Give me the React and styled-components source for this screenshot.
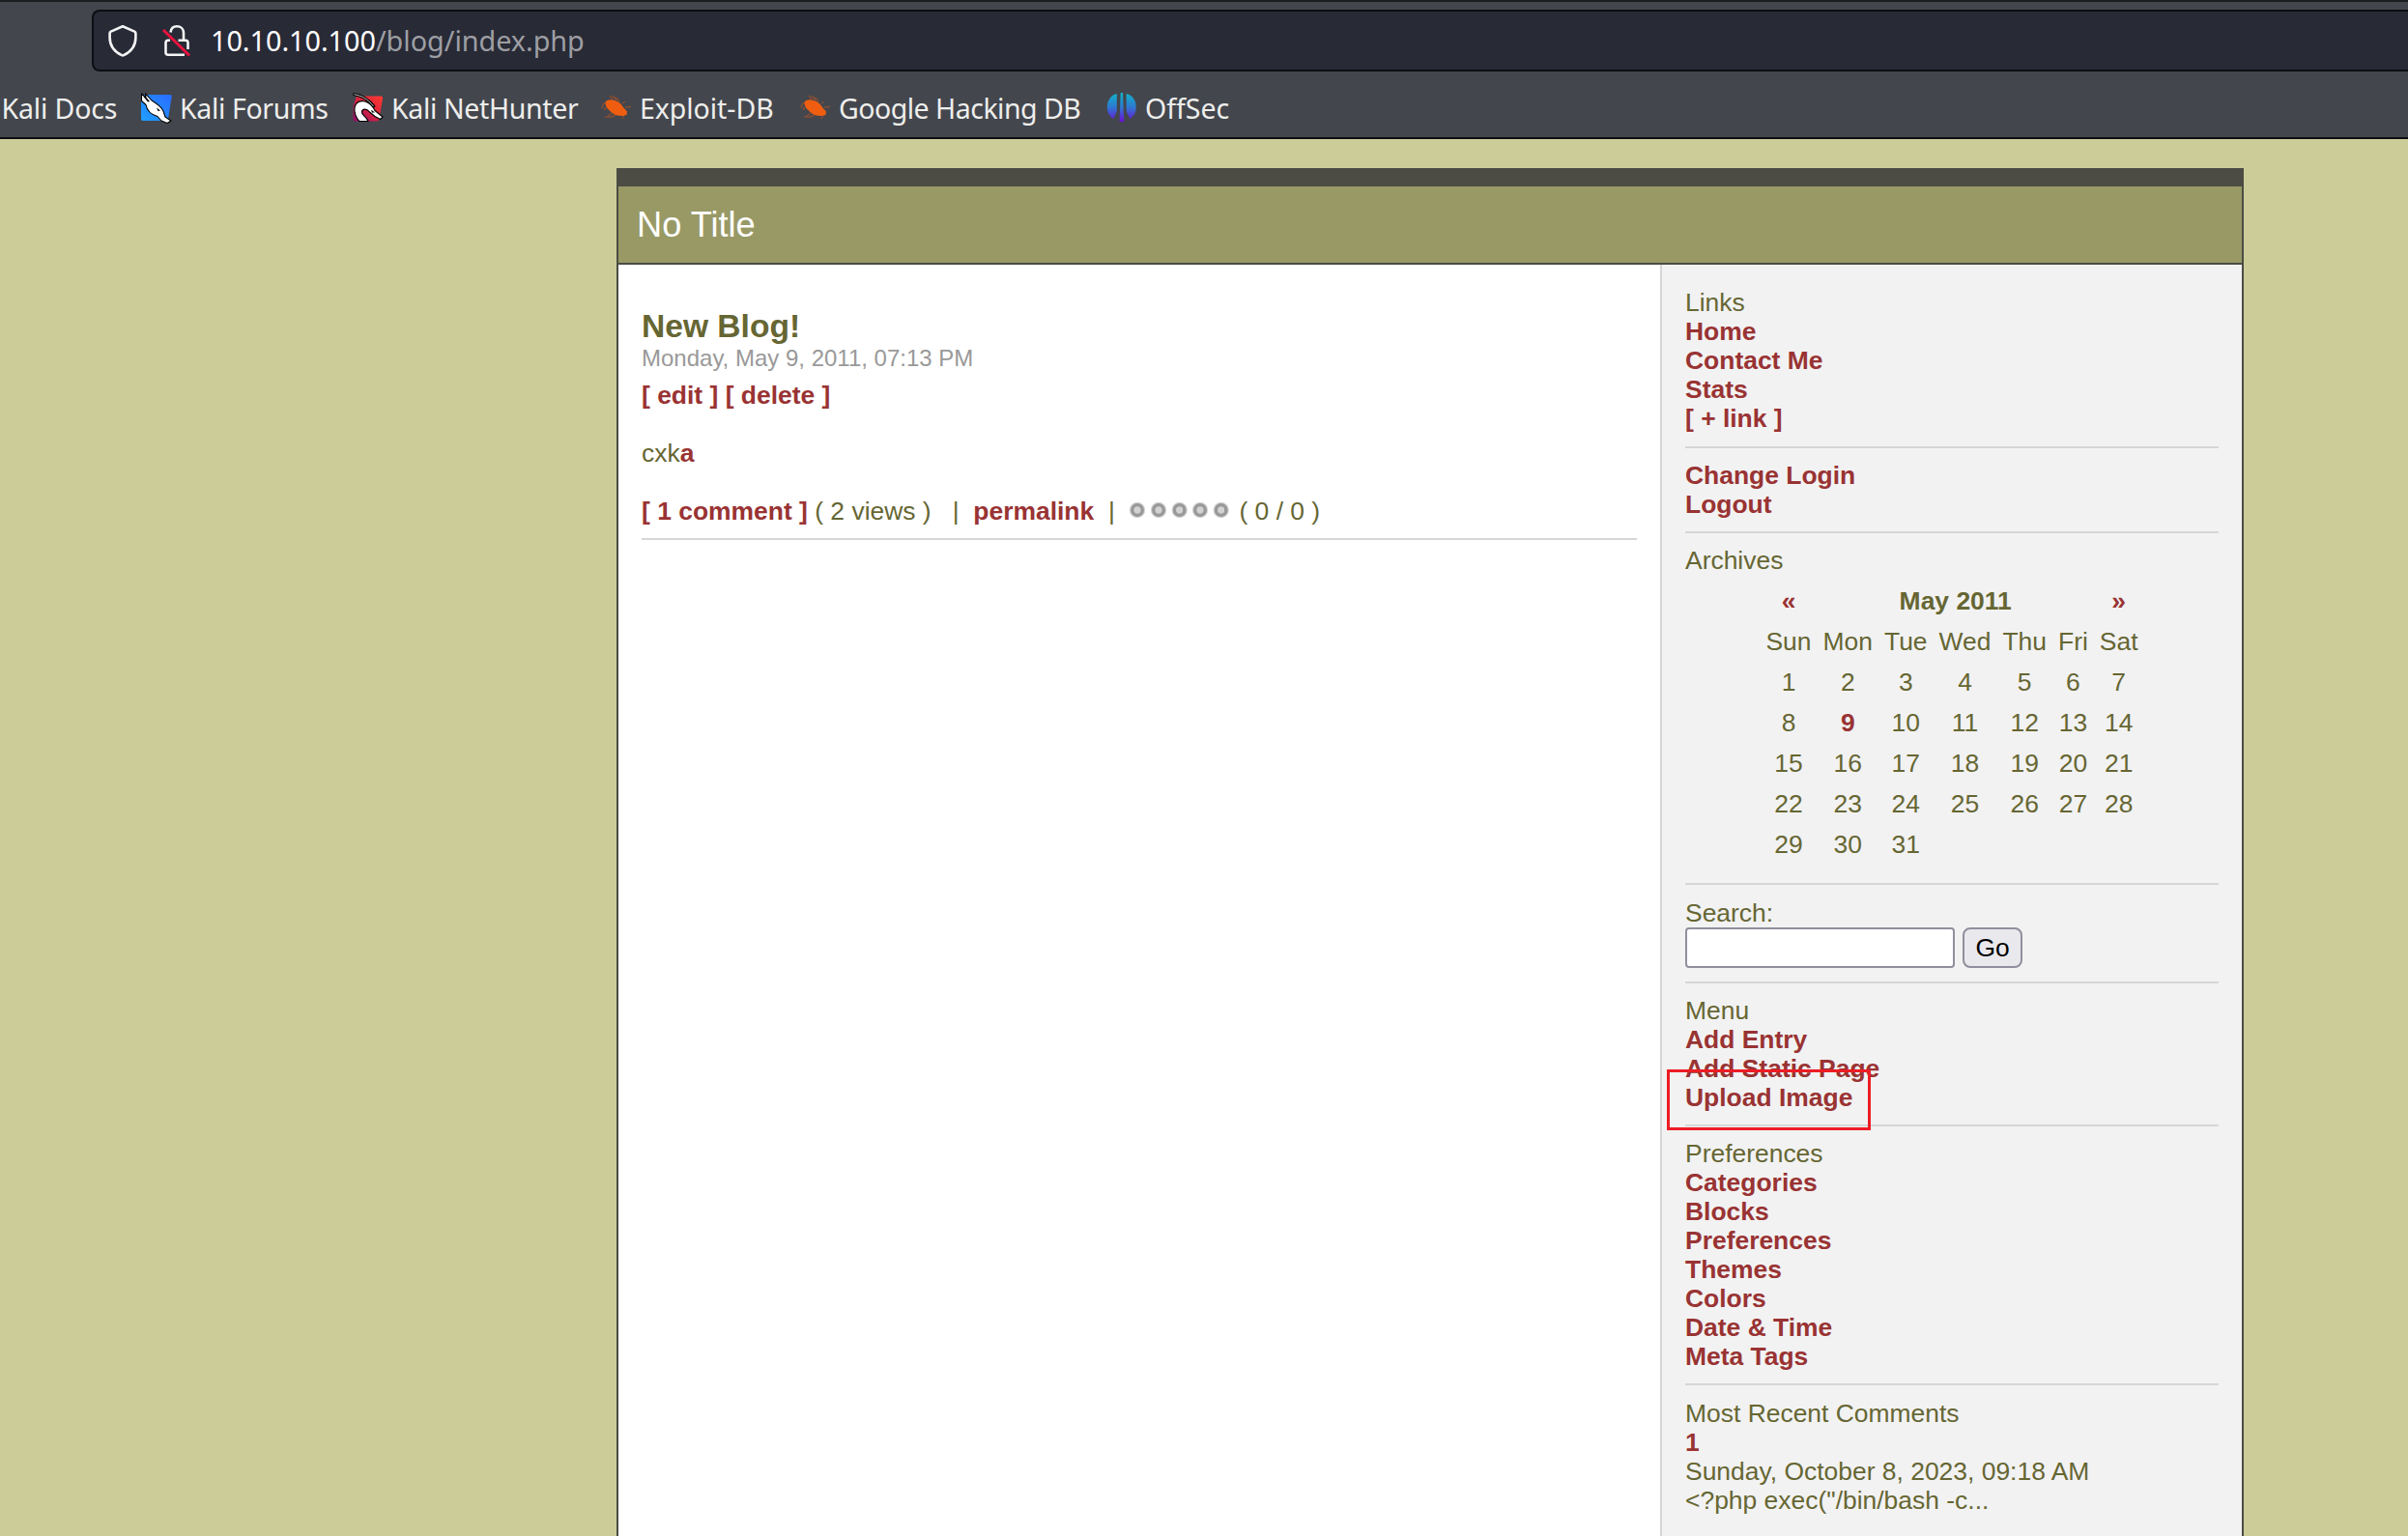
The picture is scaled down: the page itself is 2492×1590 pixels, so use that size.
import React from "react";
import styled, { createGlobalStyle } from "styled-components";

const Global = createGlobalStyle`
  html, body, #root { height: 100%; }
  body { margin: 0; overflow: hidden; background: #cccc99; }
  * { box-sizing: border-box; }
`;

const Screen = styled.div`
  display: flex;
  flex-direction: column;
  height: 1590px;
  overflow: hidden;
`;

const Chrome = styled.header`
  flex: none;
  height: 144px;
  padding-top: 8px;
  background: #43464d;
  border-top: 2px solid #1c1d21;
  border-bottom: 2px solid #0d0e13;
  font-family: "Noto Sans", sans-serif;
`;

const UrlBar = styled.div`
  display: flex;
  align-items: center;
  height: 64px;
  margin-left: 95px;
  padding-left: 11px;
  background: #282a36;
  border: 2px solid #0d0e13;
  border-right: 0;
  border-radius: 8px 0 0 8px;
`;

const UrlIcons = styled.div`
  display: flex;
  gap: 18px;
`;

const Url = styled.div`
  margin-left: 16px;
  font-size: 28.8px;
  line-height: 40px;
  letter-spacing: -0.04px;
  color: #9d9ea3;
  white-space: nowrap;
`;

const Host = styled.span`
  color: #ffffff;
`;

const Bookmarks = styled.nav`
  display: flex;
  align-items: center;
  height: 66px;
  padding: 10px 0 0;
`;

const Bookmark = styled.div`
  flex: none;
  display: flex;
  align-items: center;
  gap: 8px;
  width: ${(p) => p.$width}px;
  font-size: 28.5px;
  line-height: 40px;
  letter-spacing: ${(p) => p.$tracking}px;
  color: #eeeeec;
  white-space: nowrap;
  svg { flex: none; }
  &:first-child { padding-left: 1.5px; }
`;

const Page = styled.div`
  flex: 1;
  display: flex;
  flex-direction: column;
  width: 1684px;
  margin: 30px 0 0 638px;
  border: 2px solid #4c4c44;
  border-top-width: 19px;
  border-bottom: 0;
  background: #ffffff;
  font-family: "Liberation Sans", Arial, sans-serif;
  font-size: 26.45px;
  line-height: 30px;
  color: #666633;
  overflow: hidden;
`;

const Banner = styled.div`
  flex: none;
  height: 81px;
  padding: 19px 19px 0;
  background: #999966;
  border-bottom: 2px solid #4c4c44;
  font-size: 36.2px;
  line-height: 42px;
  color: #ffffff;
`;

const Columns = styled.div`
  flex: 1;
  display: flex;
  min-height: 0;
`;

const Main = styled.main`
  flex: 1;
  padding: 44px 24px 0;
`;

const EntryTitle = styled.h2`
  margin: 0;
  font-size: 33.6px;
  line-height: 39px;
`;

const EntryDate = styled.div`
  font-size: 24px;
  line-height: 28px;
  color: #999999;
`;

const EntryLine = styled.div`
  margin-top: ${(p) => p.$gap}px;
  white-space: pre;
`;

const Link = styled.a`
  font-weight: bold;
  color: #993333;
`;

const Rule = styled.hr`
  height: 2px;
  margin: ${(p) => p.$top ?? 13}px 0 ${(p) => p.$bottom ?? 13}px;
  border: 0;
  background: #d6d6d6;
`;

const Stars = styled.svg`
  margin: 0 8px 0 0;
  vertical-align: 1px;
`;

const Sidebar = styled.aside`
  flex: none;
  width: 602px;
  padding: 24px 24px 0;
  background: #f2f2f2;
  border-left: 2px solid #d6d6d6;
`;

const MenuLink = styled(Link)`
  display: block;
`;

const MarkedItem = styled.div`
  position: relative;
`;

const Marker = styled.span`
  position: absolute;
  left: -19px;
  top: -14px;
  width: 211px;
  height: 63px;
  border: 3px solid #ed1c24;
`;

const Calendar = styled.table`
  margin: 6px auto 0;
  border-collapse: collapse;
  text-align: center;
  th, td { padding: 6px; }
`;

const SearchRow = styled.div`
  display: flex;
  gap: 8px;
`;

const SearchInput = styled.input`
  width: 279px;
  height: 42px;
  border: 2px solid #8f8f9d;
  border-radius: 4px;
  background: #ffffff;
`;

const GoButton = styled.button`
  width: 62px;
  height: 42px;
  padding: 0;
  border: 2px solid #8f8f9d;
  border-radius: 8px;
  background: #e9e9ed;
  font: 26.4px "Liberation Sans", Arial, sans-serif;
  color: #000000;
`;

const ShieldIcon = () => (
  <svg width="38" height="38" viewBox="0 0 38 38" fill="none" stroke="#f4f4f5" strokeWidth="2.6" strokeLinejoin="round">
    <path d="M19 4.3 L31.2 9.6 Q32.4 10.2 32.4 11.5 V16 C32.4 24 27.5 30.5 20 34.2 Q19 34.7 18 34.2 C10.5 30.5 5.6 24 5.6 16 V11.5 Q5.6 10.2 6.8 9.6 Z" />
  </svg>
);

const InsecureIcon = () => (
  <svg width="38" height="38" viewBox="0 0 38 38" fill="none" stroke="#f4f4f5" strokeWidth="2.6">
    <path d="M12.5 10.5 C13 6.5 15.5 4.3 19 4.3 C23 4.3 26 7 26 11 V18.5" />
    <path d="M12 18.8 H10 Q7.5 18.8 7.5 21.3 V31.2 Q7.5 33.7 10 33.7 H27" />
    <path d="M20.5 18.8 H28 Q30.5 18.8 30.5 21.3 V28" />
    <path d="M5 8 L32 34.5" stroke="#e9133d" strokeWidth="3" />
  </svg>
);

const ForumsIcon = () => (
  <svg width="32" height="32" viewBox="0 0 32 32">
    <defs>
      <linearGradient id="forumBlue" x1="0" y1="1" x2="1" y2="0">
        <stop offset="0" stopColor="#1fa0ff" />
        <stop offset="1" stopColor="#2a6cff" />
      </linearGradient>
    </defs>
    <path d="M3 2 H30 Q32 2 31.7 4 L28 27 Q27.6 29 25.5 29 H2 Q0 29 0 27 V9 Z" fill="url(#forumBlue)" />
    <path d="M0.5 1 L5 5 L4.5 0.8 L11 8 C16 11 21 14 23 19 L25 25 L31 29 L27 31.5 L21 29 L17 24.5 C10 22.5 6 18 5 12.5 L0.5 8.5 Z" fill="#fff" stroke="#000" strokeWidth="1.1" strokeLinejoin="round" />
    <path d="M4.500 4 L9 9 L7 9.500 L2 3.500 Z" fill="#000" />
    <path d="M16 15.5 L20 18.5 L17.5 19 Z" fill="#000" />
  </svg>
);

const NetHunterIcon = () => (
  <svg width="32" height="32" viewBox="0 0 32 32">
    <defs>
      <linearGradient id="hunterRed" x1="0" y1="1" x2="1" y2="0">
        <stop offset="0" stopColor="#8d0f70" />
        <stop offset="0.5" stopColor="#d8243f" />
        <stop offset="1" stopColor="#ff3a30" />
      </linearGradient>
    </defs>
    <path d="M4 3.5 H29 Q31.5 3.5 31 6 L27.5 27 Q27 29.5 24.500 29.500 H3 Q0.500 29.500 0.500 27 V14 Z" fill="url(#hunterRed)" />
    <path d="M2 15 C3 10 8 7.500 13 9 C17 10.500 21 14 23 18.500 L31 25 L28.500 27.500 L23 24.500 L17.500 20 C15 16.500 10.500 16 9.500 19.500 C9 23.500 14 24 16 29.500 H7 C4 27 1 21 2 15 Z" fill="#fff" stroke="#000" strokeWidth="1.200" strokeLinejoin="round" />
    <path d="M0.500 1.500 C8 2.500 16 6 22.500 15" fill="none" stroke="#000" strokeWidth="3" />
    <path d="M1.500 1.700 C8 2.800 15.500 6 21.500 14" fill="none" stroke="#d9d9d9" strokeWidth="0.900" />
    <path d="M19 17.500 L23 20.500 L20 20.500 Z" fill="#000" />
  </svg>
);

const BugIcon = () => (
  <svg width="32" height="32" viewBox="0 0 32 32">
    <path
      d="M12 7 L9 3 M16 8 L12 3 M19 10 L17 6 L14 5 M5 10 L2 12 L1 16 M5 15 L3 18 M11 21 L7 24 M15 23 L11 25 H4 M24 23 L22 27 M25 15 L31 14.500 M22 11 L25 9"
      stroke="#a2532c" strokeWidth="1.400" fill="none" opacity="0.700"
    />
    <path d="M4.500 10 Q6 6.500 12 7.500 Q20 9 23 15 L27 19.500 L26.500 23 L22 24 Q14 24 10 19.500 Q4 15 4.500 10 Z" fill="#ef5e10" />
  </svg>
);

const OffSecIcon = () => (
  <svg width="32" height="32" viewBox="0 0 32 32">
    <defs>
      <linearGradient id="offsec" x1="0" y1="0" x2="0" y2="30" gradientUnits="userSpaceOnUse">
        <stop offset="0" stopColor="#0fb5c9" />
        <stop offset="0.5" stopColor="#2f78d0" />
        <stop offset="1" stopColor="#6a0fd6" />
      </linearGradient>
    </defs>
    <g fill="url(#offsec)">
      <path d="M10.800 1 V19 L7.300 27 C3 24 0.800 20.500 0.800 15 C0.800 8 4.500 2.500 10.800 1 Z" />
      <path d="M14.700 0 H17 L18.300 30 H13.500 Z" />
      <path d="M20.600 1 V19 L24.200 27 C28.500 24 30.700 20.500 30.700 15 C30.700 8 27 2.500 20.600 1 Z" />
    </g>
  </svg>
);

const STAR_CENTERS = [9, 31, 52.7, 74, 95.7];

const RatingStars = () => (
  <Stars width="106" height="18" viewBox="0 0 106 18">
    {STAR_CENTERS.map((x) => (
      <g key={x}>
        <circle cx={x} cy="9" r="8.2" fill="#d6d6d6" />
        <circle cx={x} cy="9" r="5.2" fill="none" stroke="#999999" strokeWidth="3.6" />
        <circle cx={x} cy="9" r="3.4" fill="#d2d2d2" />
      </g>
    ))}
  </Stars>
);

const BOOKMARKS = [
  { label: "Kali Docs", width: 146, tracking: -0.15 },
  { label: "Kali Forums", icon: ForumsIcon, width: 219, tracking: -0.35 },
  { label: "Kali NetHunter", icon: NetHunterIcon, width: 257, tracking: -0.35 },
  { label: "Exploit-DB", icon: BugIcon, width: 206, tracking: -0.05 },
  { label: "Google Hacking DB", icon: BugIcon, width: 317, tracking: -0.5 },
  { label: "OffSec", icon: OffSecIcon, width: 130, tracking: 0 },
];

const DAYS = ["Sun", "Mon", "Tue", "Wed", "Thu", "Fri", "Sat"];
const WEEKS = [0, 1, 2, 3, 4].map((w) => DAYS.map((_, d) => w * 7 + d + 1));
const PREFERENCES = ["Categories", "Blocks", "Preferences", "Themes", "Colors", "Date & Time", "Meta Tags"];

export default function App() {
  return (
    <Screen>
      <Global />
      <Chrome>
        <UrlBar>
          <UrlIcons>
            <ShieldIcon />
            <InsecureIcon />
          </UrlIcons>
          <Url>
            <Host>10.10.10.100</Host>/blog/index.php
          </Url>
        </UrlBar>
        <Bookmarks>
          {BOOKMARKS.map(({ label, icon: Icon, width, tracking }) => (
            <Bookmark key={label} $width={width} $tracking={tracking}>
              {Icon && <Icon />}
              {label}
            </Bookmark>
          ))}
        </Bookmarks>
      </Chrome>
      <Page>
        <Banner>No Title</Banner>
        <Columns>
          <Main>
            <EntryTitle>New Blog!</EntryTitle>
            <EntryDate>Monday, May 9, 2011, 07:13 PM</EntryDate>
            <EntryLine $gap={9}>
              <Link>[ edit ]</Link> <Link>[ delete ]</Link>
            </EntryLine>
            <EntryLine $gap={30}>
              cxk<Link>a</Link>
            </EntryLine>
            <EntryLine $gap={30}>
              <Link>[ 1 comment ]</Link>
              {" ( 2 views )\u00a0\u00a0 |\u00a0 "}
              <Link>permalink</Link>
              {"\u00a0 |\u00a0 "}
              <RatingStars />
              {"( 0 / 0 )"}
            </EntryLine>
            <Rule />
          </Main>
          <Sidebar>
            <div>Links</div>
            {["Home", "Contact Me", "Stats", "[ + link ]"].map((t) => (
              <MenuLink key={t}>{t}</MenuLink>
            ))}
            <Rule $top={14} />
            <MenuLink>Change Login</MenuLink>
            <MenuLink>Logout</MenuLink>
            <Rule />
            <div>Archives</div>
            <Calendar>
              <thead>
                <tr>
                  <td><Link>«</Link></td>
                  <th colSpan={5}>May 2011</th>
                  <td><Link>»</Link></td>
                </tr>
              </thead>
              <tbody>
                <tr>
                  {DAYS.map((d) => <td key={d}>{d}</td>)}
                </tr>
                {WEEKS.map((week) => (
                  <tr key={week[0]}>
                    {week.map((n) => (
                      <td key={n}>{n === 9 ? <Link>9</Link> : n <= 31 ? n : ""}</td>
                    ))}
                  </tr>
                ))}
              </tbody>
            </Calendar>
            <Rule $top={19} $bottom={14} />
            <div>Search:</div>
            <SearchRow>
              <SearchInput />
              <GoButton>Go</GoButton>
            </SearchRow>
            <Rule $top={14} />
            <div>Menu</div>
            <MenuLink>Add Entry</MenuLink>
            <MenuLink>Add Static Page</MenuLink>
            <MarkedItem>
              <MenuLink>Upload Image</MenuLink>
              <Marker />
            </MarkedItem>
            <Rule />
            <div>Preferences</div>
            {PREFERENCES.map((t) => (
              <MenuLink key={t}>{t}</MenuLink>
            ))}
            <Rule $bottom={14} />
            <div>Most Recent Comments</div>
            <MenuLink>1</MenuLink>
            <div>Sunday, October 8, 2023, 09:18 AM</div>
            <div>{'<?php exec("/bin/bash -c...'}</div>
          </Sidebar>
        </Columns>
      </Page>
    </Screen>
  );
}
